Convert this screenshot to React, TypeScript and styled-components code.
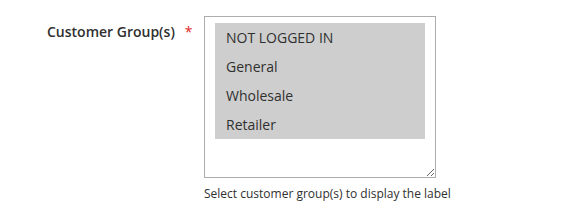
import styled, { createGlobalStyle } from 'styled-components';

const Global = createGlobalStyle`
  body {
    margin: 0;
    background: #fff;
    font-family: "Open Sans", "Liberation Sans", sans-serif;
    color: #303030;
  }
`;

const Field = styled.div`
  display: flex;
  align-items: flex-start;
  padding-top: 16px;
`;

const Label = styled.label`
  width: 204px;
  box-sizing: border-box;
  padding: 6px 0 0 47px;
  font-size: 14px;
  font-weight: 600;
  line-height: 19px;
  white-space: nowrap;
  color: #303030;
`;

const Required = styled.span`
  color: #e22626;
  font-weight: 400;
  margin-left: 10px;
`;

const Control = styled.div`
  display: flex;
  flex-direction: column;
`;

const MultiSelect = styled.div`
  width: 232px;
  height: 162px;
  box-sizing: border-box;
  border: 1px solid #adadad;
  padding: 6px 10px 0 10px;
  background: #fff;
  overflow: auto;
  resize: both;
`;

const Option = styled.div<{ $selected?: boolean }>`
  height: 29px;
  display: flex;
  align-items: center;
  padding-left: 11px;
  font-size: 14px;
  color: #303030;
  background: ${p => (p.$selected ? '#cecece' : 'transparent')};
`;

const Note = styled.div`
  margin-top: 8px;
  font-size: 12px;
  line-height: 16px;
  color: #303030;
`;

const groups = ['NOT LOGGED IN', 'General', 'Wholesale', 'Retailer'];

export default function App() {
  return (
    <>
      <Global />
      <Field>
        <Label>
          Customer Group(s)
          <Required>*</Required>
        </Label>
        <Control>
          <MultiSelect>
            {groups.map(g => (
              <Option key={g} $selected>
                {g}
              </Option>
            ))}
          </MultiSelect>
          <Note>Select customer group(s) to display the label</Note>
        </Control>
      </Field>
    </>
  );
}
